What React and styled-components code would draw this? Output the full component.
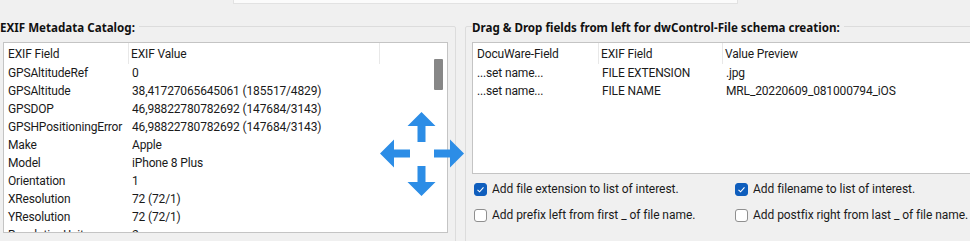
import React from 'react';
import styled, { createGlobalStyle } from 'styled-components';

const GlobalStyle = createGlobalStyle`
    body {
        margin: 0;
        background-color: #F0F0F0;
        font-family: Roboto, "Noto Sans", sans-serif;
        color: #1A1A1A;
        overflow: hidden;
    }
`;

const Page = styled.div`
    position: relative;
    width: 970px;
    height: 241px;
    overflow: hidden;
    display: flex;
    flex-direction: column;
`;

const TopStrip = styled.div`
    height: 5px;
    display: flex;
    padding-left: 233px;
`;

const TopInput = styled.div`
    width: 503px;
    height: 3px;
    background-color: #FBFBFB;
    border: 1px solid #E2E2E2;
    border-top: none;
`;

const Columns = styled.div`
    display: flex;
    gap: 9px;
    margin-left: -6px;
    margin-top: 12px;
`;

const Group = styled.fieldset`
    box-sizing: border-box;
    width: ${props => props.width}px;
    flex-shrink: 0;
    margin: 0;
    border: 1px solid #DCDCDC;
    border-radius: 2px;
    padding: 6px 0 ${props => props.bottom}px ${props => props.padLeft}px;
`;

const Title = styled.legend`
    font-family: "Noto Sans", sans-serif;
    font-size: 11.6px;
    font-weight: 700;
    line-height: 16px;
    padding: 4px 4px 0 0;
    margin-left: ${props => props.shift}px;
    color: #111;
`;

const ListBox = styled.div`
    box-sizing: border-box;
    width: ${props => props.width}px;
    height: ${props => props.height}px;
    background-color: #FFFFFF;
    border: 1px solid #C4C4C4;
    display: flex;
    overflow: hidden;
`;

const Table = styled.div`
    flex: 1;
    display: flex;
    flex-direction: column;
    font-size: 12px;
    letter-spacing: -0.15px;
`;

const HeaderRow = styled.div`
    display: grid;
    grid-template-columns: ${props => props.cols};
    height: 21px;
    flex-shrink: 0;
`;

const HeaderCell = styled.div`
    display: flex;
    align-items: center;
    padding-left: ${props => (props.first ? 4 : 2)}px;
    border-right: ${props => (props.divider ? '1px solid #E8E8E8' : 'none')};
    white-space: nowrap;
`;

const Row = styled.div`
    display: grid;
    grid-template-columns: ${props => props.cols};
    height: 18px;
    flex-shrink: 0;
`;

const Cell = styled.div`
    display: flex;
    align-items: center;
    padding-left: ${props => (props.first ? 4 : 3)}px;
    white-space: nowrap;
`;

const ScrollBar = styled.div`
    width: 17px;
    flex-shrink: 0;
    display: flex;
    flex-direction: column;
`;

const Thumb = styled.div`
    width: 9px;
    height: 31px;
    margin: 16px 0 0 4px;
    background-color: #878787;
    border-radius: 1px;
`;

const CheckGrid = styled.div`
    display: grid;
    grid-template-columns: 261px 1fr;
    grid-auto-rows: 26px;
    padding: 2px 0 0 2px;
    font-size: 12px;
    letter-spacing: -0.05px;
`;

const CheckItem = styled.label`
    display: flex;
    align-items: center;
    gap: 5px;
    white-space: nowrap;
`;

const Box = styled.span`
    box-sizing: border-box;
    width: 13px;
    height: 13px;
    border-radius: 3px;
    border: 1px solid ${props => (props.checked ? '#0F5EBD' : '#8F8F8F')};
    background-color: ${props => (props.checked ? '#0F5EBD' : '#FFFFFF')};
    display: flex;
    align-items: center;
    justify-content: center;
`;

const MoveIcon = styled.svg`
    position: absolute;
    left: 379px;
    top: 111px;
`;

const exifCols = '125px 251px 1fr';
const dropCols = '126px 124px 1fr';

const exifRows = [
    ['GPSAltitudeRef', '0'],
    ['GPSAltitude', '38,41727065645061 (185517/4829)'],
    ['GPSDOP', '46,98822780782692 (147684/3143)'],
    ['GPSHPositioningError', '46,98822780782692 (147684/3143)'],
    ['Make', 'Apple'],
    ['Model', 'iPhone 8 Plus'],
    ['Orientation', '1'],
    ['XResolution', '72 (72/1)'],
    ['YResolution', '72 (72/1)'],
    ['ResolutionUnit', '2']
];

const dropRows = [
    ['...set name...', 'FILE EXTENSION', '.jpg'],
    ['...set name...', 'FILE NAME', 'MRL_20220609_081000794_iOS']
];

const checks = [
    ['Add file extension to list of interest.', true],
    ['Add filename to list of interest.', true],
    ['Add prefix left from first _ of file name.', false],
    ['Add postfix right from last _ of file name.', false]
];

const Check = ({ label, checked }) => (
    <CheckItem>
        <Box checked={checked}>
            {checked && (
                <svg width="9" height="9" viewBox="0 0 9 9">
                    <polyline points="1.5,4.8 3.6,6.8 7.5,2.4" fill="none" stroke="#FFFFFF" strokeWidth="1.1" />
                </svg>
            )}
        </Box>
        {label}
    </CheckItem>
);

class App extends React.Component {
    render() {
        return (
            <Page>
                <GlobalStyle />
                <TopStrip>
                    <TopInput />
                </TopStrip>

                <Columns>
                    <Group width={462} padLeft={8} bottom={20}>
                        <Title shift={-3}>EXIF Metadata Catalog:</Title>
                        <ListBox width={445} height={191}>
                            <Table>
                                <HeaderRow cols={exifCols}>
                                    <HeaderCell first divider>EXIF Field</HeaderCell>
                                    <HeaderCell divider>EXIF Value</HeaderCell>
                                    <HeaderCell />
                                </HeaderRow>
                                {exifRows.map(([field, value]) => (
                                    <Row cols={exifCols} key={field}>
                                        <Cell first>{field}</Cell>
                                        <Cell>{value}</Cell>
                                    </Row>
                                ))}
                            </Table>
                            <ScrollBar>
                                <Thumb />
                            </ScrollBar>
                        </ListBox>
                    </Group>

                    <Group width={530} padLeft={6} bottom={2}>
                        <Title shift={0}>Drag &amp; Drop fields from left for dwControl-File schema creation:</Title>
                        <ListBox width={524} height={132}>
                            <Table>
                                <HeaderRow cols={dropCols}>
                                    <HeaderCell first divider>DocuWare-Field</HeaderCell>
                                    <HeaderCell divider>EXIF Field</HeaderCell>
                                    <HeaderCell>Value Preview</HeaderCell>
                                </HeaderRow>
                                {dropRows.map(([name, field, preview]) => (
                                    <Row cols={dropCols} key={field}>
                                        <Cell first>{name}</Cell>
                                        <Cell>{field}</Cell>
                                        <Cell>{preview}</Cell>
                                    </Row>
                                ))}
                            </Table>
                        </ListBox>
                        <CheckGrid>
                            {checks.map(([label, checked]) => (
                                <Check label={label} checked={checked} key={label} />
                            ))}
                        </CheckGrid>
                    </Group>
                </Columns>

                <MoveIcon width="86" height="86" viewBox="0 0 86 86">
                    <g fill="#2C8DE6">
                        <polygon points="42.5,1 56.5,15 46.5,15 46.5,31 38.5,31 38.5,15 28.5,15" />
                        <polygon points="42.5,85 56.5,71 46.5,71 46.5,55 38.5,55 38.5,71 28.5,71" />
                        <polygon points="1,42.5 15,28.5 15,38.5 31,38.5 31,46.5 15,46.5 15,56.5" />
                        <polygon points="85,42.5 71,28.5 71,38.5 55,38.5 55,46.5 71,46.5 71,56.5" />
                    </g>
                </MoveIcon>
            </Page>
        );
    }
}

export default App;
